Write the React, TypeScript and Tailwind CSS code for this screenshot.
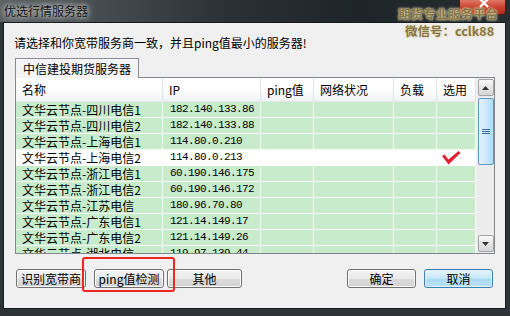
import React from "react";

const rows: [string, string][] = [
  ["文华云节点-四川电信1", "182.140.133.86"],
  ["文华云节点-四川电信2", "182.140.133.88"],
  ["文华云节点-上海电信1", "114.80.0.210"],
  ["文华云节点-上海电信2", "114.80.0.213"],
  ["文华云节点-浙江电信1", "60.190.146.175"],
  ["文华云节点-浙江电信2", "60.190.146.172"],
  ["文华云节点-江苏电信", "180.96.70.80"],
  ["文华云节点-广东电信1", "121.14.149.17"],
  ["文华云节点-广东电信2", "121.14.149.26"],
  ["文华云节点-湖北电信", "119.97.139.44"],
];

const headers = ["名称", "IP", "ping值", "网络状况", "负载", "选用"];
const widths = ["w-[147px]", "w-[98px]", "w-[53px]", "w-[80px]", "w-[43px]", "w-[39px]"];

function Btn({ label, w, focus }: { label: string; w: string; focus?: boolean }) {
  return (
    <div
      className={
        "h-[19px] flex items-center justify-center rounded-[3px] border text-[12px] leading-none whitespace-nowrap " +
        w +
        (focus
          ? " border-[#3c7fb1] bg-[linear-gradient(#e9f6fd,#c4e5f6_50%,#a9d9f2_51%,#bde3f6)] shadow-[inset_0_0_0_1px_#dff2fc]"
          : " border-[#707070] bg-[linear-gradient(#f4f4f4,#e9e9e9_50%,#dcdcdc_51%,#d2d2d2)] shadow-[inset_0_0_0_1px_#fbfbfb]")
      }
    >
      {label}
    </div>
  );
}

export default function App() {
  return (
    <div className="relative w-[510px] h-[316px] overflow-hidden bg-[#2c3437] font-['Noto_Sans_CJK_SC',sans-serif] text-[12px] text-black">
      {/* title bar */}
      <div className="h-[22px] flex items-center pl-[4px] bg-[linear-gradient(90deg,#5b6164_0%,#454b4f_20%,#2a3034_45%,#1e2528_70%,#262e31_100%)]">
        <span className="text-[12px] leading-none text-[#141414] [text-shadow:0_0_5px_#e8e8e8,0_0_9px_#cfcfcf]">
          优选行情服务器
        </span>
      </div>

      {/* client area */}
      <div className="ml-[3px] w-[503px] h-[287px] border border-[#161b1d] bg-[#f0f0f0] flex flex-col">
        <div className="mt-[13px] pl-[10px] h-[14px] leading-[14px] text-[12px]">
          请选择和你宽带服务商一致，并且ping值最小的服务器!
        </div>

        {/* tab */}
        <div className="mt-[8px] ml-[11px] w-[124px] h-[20px] -mb-[1px] relative z-10 border border-b-0 border-[#898c95] bg-[#f4f4f4] pl-[7px] leading-[19px] text-[12px]">
          中信建投期货服务器
        </div>

        {/* panel */}
        <div className="ml-[11px] w-[480px] h-[177px] border border-[#828790] bg-white flex">
          <div className="w-[460px] h-full overflow-hidden flex flex-col">
            <div className="h-[24px] shrink-0 flex border-b border-[#e4e6ea] bg-[linear-gradient(#ffffff,#ffffff_45%,#f1f2f4)]">
              {headers.map((h, i) => (
                <div
                  key={h}
                  className={widths[i] + " h-full flex items-center pl-[6px] border-r border-[#e0e3e8] text-[12px]"}
                >
                  {h}
                </div>
              ))}
            </div>
            {rows.map(([name, ip], r) => {
              const sel = r === 3;
              return (
                <div key={r} className={"h-[16px] shrink-0 flex " + (sel ? "bg-white" : "bg-[#c8eccb]")}>
                  {widths.map((w, i) => (
                    <div
                      key={i}
                      className={
                        w +
                        " h-full flex items-center border-b border-r " +
                        (sel ? "border-white" : "border-[#f4fbf5]") +
                        (i === 0 ? " pl-[6px]" : i === 1 ? " pl-[7px]" : i === 5 ? " pl-[5px]" : "")
                      }
                    >
                      {i === 0 && <span className="text-[12px] leading-none whitespace-nowrap">{name}</span>}
                      {i === 1 && (
                        <span className="font-['Liberation_Mono',monospace] text-[11px] tracking-[-0.6px] leading-none whitespace-nowrap">
                          {ip}
                        </span>
                      )}
                      {i === 5 && sel && (
                        <svg width="19" height="14" viewBox="0 0 19 14">
                          <polygon points="0,5 2.5,3.5 6.5,8.5 16.5,0 18.5,2 6.5,13.5" fill="#e3202f" />
                        </svg>
                      )}
                    </div>
                  ))}
                </div>
              );
            })}
          </div>

          {/* scrollbar */}
          <div className="w-[18px] h-full bg-[#ececec] flex flex-col items-center pt-[1px] pb-[1px] border-l border-[#f0f0f0]">
            <div className="w-[16px] h-[17px] rounded-[2px] border border-[#a3a3a3] bg-[linear-gradient(#fafafa,#e6e6e6_50%,#d6d6d6)] flex items-center justify-center">
              <svg width="7" height="4" viewBox="0 0 7 4">
                <polygon points="0,4 3.5,0 7,4" fill="#333" />
              </svg>
            </div>
            <div className="mt-[2px] w-[16px] h-[67px] rounded-[2px] border border-[#5f97c4] bg-[linear-gradient(90deg,#e2f1fb,#cde8f8_50%,#b2dbf3)] flex flex-col items-center justify-center gap-[1px]">
              <div className="w-[8px] h-[1px] bg-[#3f6f99]" />
              <div className="w-[8px] h-[1px] bg-[#3f6f99]" />
              <div className="w-[8px] h-[1px] bg-[#3f6f99]" />
            </div>
            <div className="flex-1" />
            <div className="w-[16px] h-[17px] rounded-[2px] border border-[#a3a3a3] bg-[linear-gradient(#fafafa,#e6e6e6_50%,#d6d6d6)] flex items-center justify-center">
              <svg width="7" height="4" viewBox="0 0 7 4">
                <polygon points="0,0 7,0 3.5,4" fill="#333" />
              </svg>
            </div>
          </div>
        </div>

        {/* buttons */}
        <div className="mt-[15px] pl-[12px] flex items-center">
          <Btn label="识别宽带商" w="w-[70px]" />
          <div className="ml-[8px]">
            <Btn label="ping值检测" w="w-[70px]" />
          </div>
          <div className="ml-[3px]">
            <Btn label="其他" w="w-[75px]" />
          </div>
          <div className="ml-[105px]">
            <Btn label="确定" w="w-[69px]" />
          </div>
          <div className="ml-[8px]">
            <Btn label="取消" w="w-[69px]" focus />
          </div>
        </div>
      </div>

      {/* close button */}
      <div className="absolute left-[459px] top-0 w-[47px] h-[15px] rounded-b-[4px] border border-t-0 border-[#5a1a14] bg-[linear-gradient(#e0786a,#c9442f_50%,#b02a1a)]">
        <svg className="absolute left-[19px] -top-[2px]" width="10" height="10" viewBox="0 0 10 10">
          <path d="M1 1 L9 9 M9 1 L1 9" stroke="#fff" strokeWidth="2.2" />
        </svg>
      </div>

      {/* watermark */}
      <div className="absolute left-[398px] top-[5px] font-bold text-[12.5px] leading-[17px] text-[#857544] [text-shadow:0_0_2px_#eee4c0,0_0_3px_#d8cfa8]">
        <div>期货专业服务平台</div>
        <div className="pl-[7px]">微信号：cclk88</div>
      </div>

      {/* red annotation */}
      <div className="absolute left-[82px] top-[257px] w-[93px] h-[35px] border-2 border-[#ea2a22] rounded-[3px]" />
    </div>
  );
}
